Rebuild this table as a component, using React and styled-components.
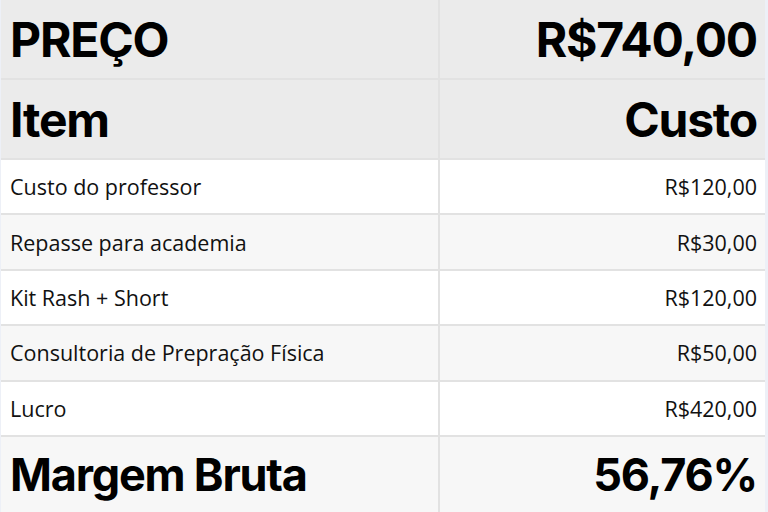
import React from 'react';
import styled, { createGlobalStyle } from 'styled-components';

const Global = createGlobalStyle`
  html, body {
    margin: 0;
    padding: 0;
    background: #edf0f7;
  }
  body {
    font-family: 'Open Sans', 'Liberation Sans', sans-serif;
    color: #111;
  }
`;

const Table = styled.div`
  margin: 0 3px 0 1px;
  width: 764px;
  height: 512px;
  display: grid;
  grid-template-columns: 439px 1fr;
  grid-template-rows: 80px 80px repeat(5, 55.4px) 1fr;
  background: #fff;
  overflow: hidden;
`;

const Cell = styled.div`
  display: flex;
  align-items: center;
  justify-content: ${p => (p.$right ? 'flex-end' : 'flex-start')};
  padding: ${p => (p.$right ? '0 8px 0 0' : '0 0 0 9px')};
  background: ${p => p.$bg};
  border-bottom: 2px solid #e2e2e2;
  border-right: ${p => (p.$right ? 'none' : '2px solid #e2e2e2')};
  font-family: ${p => (p.$size ? "Inter, 'Open Sans', sans-serif" : "'Open Sans', sans-serif")};
  font-size: ${p => (p.$size === 'big' ? '48px' : p.$size === 'huge' ? '45px' : '21.5px')};
  font-weight: ${p => (p.$size ? 700 : 400)};
  letter-spacing: ${p => (p.$size ? '-1.2px' : '0')};
  color: ${p => (p.$size ? '#000' : '#111')};
  white-space: nowrap;
  &:nth-last-child(-n + 2) {
    border-bottom: none;
  }
`;

const rows = [
  ['Custo do professor', 'R$120,00'],
  ['Repasse para academia', 'R$30,00'],
  ['Kit Rash + Short', 'R$120,00'],
  ['Consultoria de Prepração Física', 'R$50,00'],
  ['Lucro', 'R$420,00'],
];

export default function App() {
  return (
    <>
      <Global />
      <Table>
        <Cell $bg="#ebebeb" $size="big">PREÇO</Cell>
        <Cell $bg="#ebebeb" $size="big" $right>R$740,00</Cell>
        <Cell $bg="#ebebeb" $size="big">Item</Cell>
        <Cell $bg="#ebebeb" $size="big" $right>Custo</Cell>
        {rows.map(([name, cost], i) => (
          <React.Fragment key={name}>
            <Cell $bg={i % 2 ? '#f7f7f7' : '#ffffff'}>{name}</Cell>
            <Cell $bg={i % 2 ? '#f7f7f7' : '#ffffff'} $right>{cost}</Cell>
          </React.Fragment>
        ))}
        <Cell $bg="#f7f7f7" $size="huge">Margem Bruta</Cell>
        <Cell $bg="#f7f7f7" $size="huge" $right>56,76%</Cell>
      </Table>
    </>
  );
}
